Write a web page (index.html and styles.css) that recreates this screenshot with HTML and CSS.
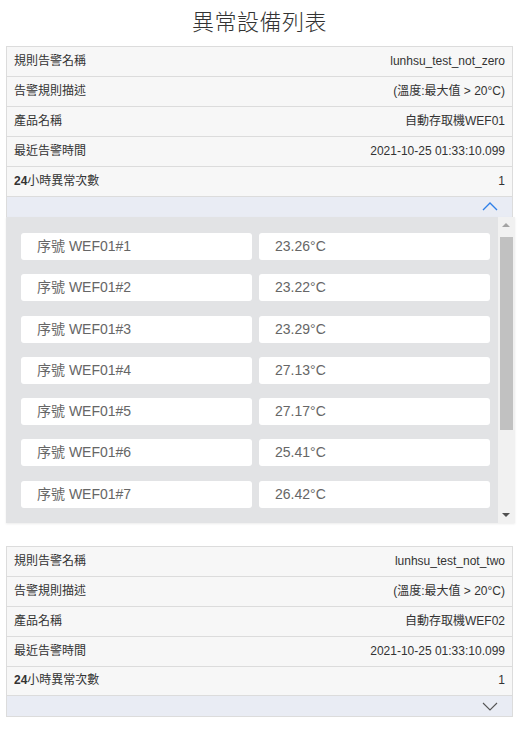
FILE: index.html
```html
<!DOCTYPE html>
<html lang="zh-Hant">
<head>
<meta charset="utf-8">
<link rel="stylesheet" href="styles.css">
</head>
<body>
<div class="page">
  <h1 class="title">異常設備列表</h1>

  <section class="card">
    <div class="row"><span class="label">規則告警名稱</span><span class="value">lunhsu_test_not_zero</span></div>
    <div class="row"><span class="label">告警規則描述</span><span class="value">(溫度:最大值 &gt; 20°C)</span></div>
    <div class="row"><span class="label">產品名稱</span><span class="value">自動存取機WEF01</span></div>
    <div class="row"><span class="label">最近告警時間</span><span class="value">2021-10-25 01:33:10.099</span></div>
    <div class="row"><span class="label"><b class="num">24</b>小時異常次數</span><span class="value">1</span></div>
    <div class="toggle">
      <svg class="chev up" width="16" height="10" viewBox="0 0 16 10"><path d="M1 9 L8 2 L15 9" fill="none" stroke="#2f7fe8" stroke-width="1.4"/></svg>
    </div>
    <div class="detail">
      <div class="list">
        <div class="item"><div class="box">序號 WEF01#1</div><div class="box">23.26°C</div></div>
        <div class="item"><div class="box">序號 WEF01#2</div><div class="box">23.22°C</div></div>
        <div class="item"><div class="box">序號 WEF01#3</div><div class="box">23.29°C</div></div>
        <div class="item"><div class="box">序號 WEF01#4</div><div class="box">27.13°C</div></div>
        <div class="item"><div class="box">序號 WEF01#5</div><div class="box">27.17°C</div></div>
        <div class="item"><div class="box">序號 WEF01#6</div><div class="box">25.41°C</div></div>
        <div class="item"><div class="box">序號 WEF01#7</div><div class="box">26.42°C</div></div>
      </div>
      <div class="scrollbar">
        <div class="arrow arrow-up"></div>
        <div class="track"><div class="thumb"></div></div>
        <div class="arrow arrow-down"></div>
      </div>
    </div>
  </section>

  <section class="card card2">
    <div class="row"><span class="label">規則告警名稱</span><span class="value">lunhsu_test_not_two</span></div>
    <div class="row"><span class="label">告警規則描述</span><span class="value">(溫度:最大值 &gt; 20°C)</span></div>
    <div class="row"><span class="label">產品名稱</span><span class="value">自動存取機WEF02</span></div>
    <div class="row"><span class="label">最近告警時間</span><span class="value">2021-10-25 01:33:10.099</span></div>
    <div class="row"><span class="label"><b class="num">24</b>小時異常次數</span><span class="value">1</span></div>
    <div class="toggle last">
      <svg class="chev" width="16" height="10" viewBox="0 0 16 10"><path d="M1 2 L8 9 L15 2" fill="none" stroke="#555" stroke-width="1.1"/></svg>
    </div>
  </section>
</div>
</body>
</html>
```
FILE: styles.css
```css
* { box-sizing: border-box; }
html, body { margin: 0; padding: 0; background: #fff; }
body {
  font-family: "Liberation Sans", "Noto Sans CJK TC", sans-serif;
  color: #333;
}
.page { padding: 8px 6px 0 6px; }
.title {
  margin: 0;
  height: 38px;
  text-align: center;
  font-size: 22px;
  font-weight: 300;
  line-height: 30px;
  color: #333;
  letter-spacing: 0.5px;
}
.card {
  width: 507px;
}
.card2 { margin-top: 23px; }
.row {
  display: flex;
  justify-content: space-between;
  align-items: center;
  height: 30px;
  padding: 0 7px 2px 7px;
  background: #f7f7f7;
  border: 1px solid #dcdcdc;
  border-bottom: none;
  font-size: 12px;
  line-height: 16px;
  color: #333;
}
.card2 .row:nth-child(5) { height: 29px; }
.num { font-weight: 700; }
.toggle {
  height: 21px;
  background: #e9ecf4;
  border: 1px solid #dcdcdc;
  border-bottom: none;
  display: flex;
  justify-content: flex-end;
  align-items: center;
  padding-right: 14px;
}
.toggle.last { border-bottom: 1px solid #dcdcdc; height: 22px; }
.chev.up { margin-top: -2px; }
.detail {
  width: 509px;
  height: 306px;
  background: #e2e3e5;
  display: flex;
  box-shadow: 0 1px 2px rgba(0,0,0,0.08);
}
.list {
  flex: 1;
  padding: 16px 8px 0 15px;
  overflow: hidden;
}
.item {
  display: flex;
  gap: 7px;
  margin-bottom: 14.3px;
}
.box {
  flex: 1;
  height: 27px;
  background: #fff;
  border-radius: 3px;
  font-size: 14px;
  line-height: 26px;
  padding-left: 16px;
  color: #666;
}
.scrollbar {
  width: 17px;
  background: #f1f1f1;
  display: flex;
  flex-direction: column;
  align-items: center;
}
.arrow { width: 17px; height: 17px; position: relative; }
.arrow-up::after, .arrow-down::after {
  content: "";
  position: absolute;
  left: 4px;
  border-left: 4px solid transparent;
  border-right: 4px solid transparent;
}
.arrow-up::after { top: 6px; border-bottom: 4px solid #a3a3a3; }
.arrow-down::after { top: 7px; border-top: 4px solid #505050; }
.track { flex: 1; width: 17px; padding: 3px 2px 0 2px; }
.thumb { height: 193px; background: #c1c1c1; }
```
